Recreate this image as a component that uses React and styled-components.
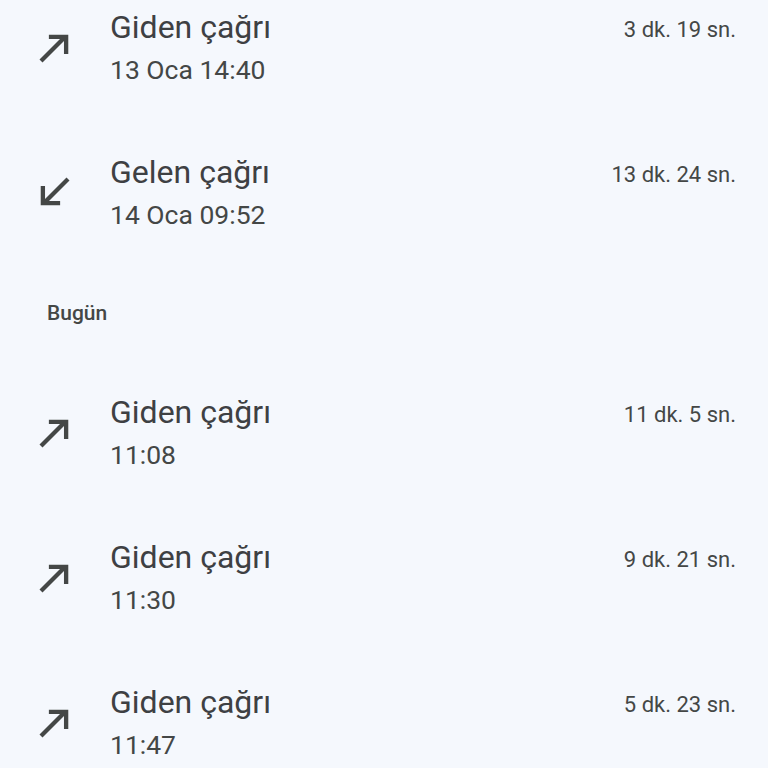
import styled, { createGlobalStyle } from "styled-components";

const GlobalStyle = createGlobalStyle`
  body {
    margin: 0;
    background: #f5f8fd;
    font-family: Roboto, "Noto Sans", sans-serif;
    overflow: hidden;
  }
`;

const List = styled.div`
  display: flex;
  flex-direction: column;
  margin-top: -25px;
`;

const Row = styled.div`
  display: grid;
  grid-template-columns: 110px 1fr auto;
  align-items: center;
  height: 145px;
  padding-right: 32px;
`;

const IconCell = styled.div`
  display: flex;
  justify-content: center;
  padding-right: 2px;
  color: #444746;
`;

const TextBlock = styled.div`
  display: flex;
  flex-direction: column;
  gap: 7px;
`;

const Title = styled.div`
  font-size: 32px;
  line-height: 38px;
  color: #3e4043;
`;

const Sub = styled.div`
  font-size: 26.5px;
  line-height: 34px;
  color: #444746;
`;

const Duration = styled.div`
  margin-bottom: 35px;
  font-size: 22px;
  line-height: 28px;
  color: #444746;
`;

const SectionHeader = styled.div`
  height: 95px;
  display: flex;
  align-items: center;
  padding-left: 47px;
  font-size: 21px;
  font-weight: 500;
  color: #444746;
`;

const Arrow = ({ dir }) => (
  <svg
    width="45"
    height="45"
    viewBox="0 0 24 24"
    fill="none"
    stroke="currentColor"
    strokeWidth="2.3"
    strokeLinejoin="miter"
    style={dir === "in" ? { transform: "rotate(180deg)" } : undefined}
  >
    <path d="M4.8 19.2 17.6 6.4" />
    <path d="M9 6.3h9.2v9.2" />
  </svg>
);

const CallRow = ({ dir, title, sub, duration }) => (
  <Row>
    <IconCell>
      <Arrow dir={dir} />
    </IconCell>
    <TextBlock>
      <Title>{title}</Title>
      <Sub>{sub}</Sub>
    </TextBlock>
    <Duration>{duration}</Duration>
  </Row>
);

const older = [
  { dir: "out", title: "Giden çağrı", sub: "13 Oca 14:40", duration: "3 dk. 19 sn." },
  { dir: "in", title: "Gelen çağrı", sub: "14 Oca 09:52", duration: "13 dk. 24 sn." },
];

const today = [
  { dir: "out", title: "Giden çağrı", sub: "11:08", duration: "11 dk. 5 sn." },
  { dir: "out", title: "Giden çağrı", sub: "11:30", duration: "9 dk. 21 sn." },
  { dir: "out", title: "Giden çağrı", sub: "11:47", duration: "5 dk. 23 sn." },
];

export default function App() {
  return (
    <>
      <GlobalStyle />
      <List>
        {older.map((c, i) => (
          <CallRow key={"o" + i} {...c} />
        ))}
        <SectionHeader>Bugün</SectionHeader>
        {today.map((c, i) => (
          <CallRow key={"t" + i} {...c} />
        ))}
      </List>
    </>
  );
}
